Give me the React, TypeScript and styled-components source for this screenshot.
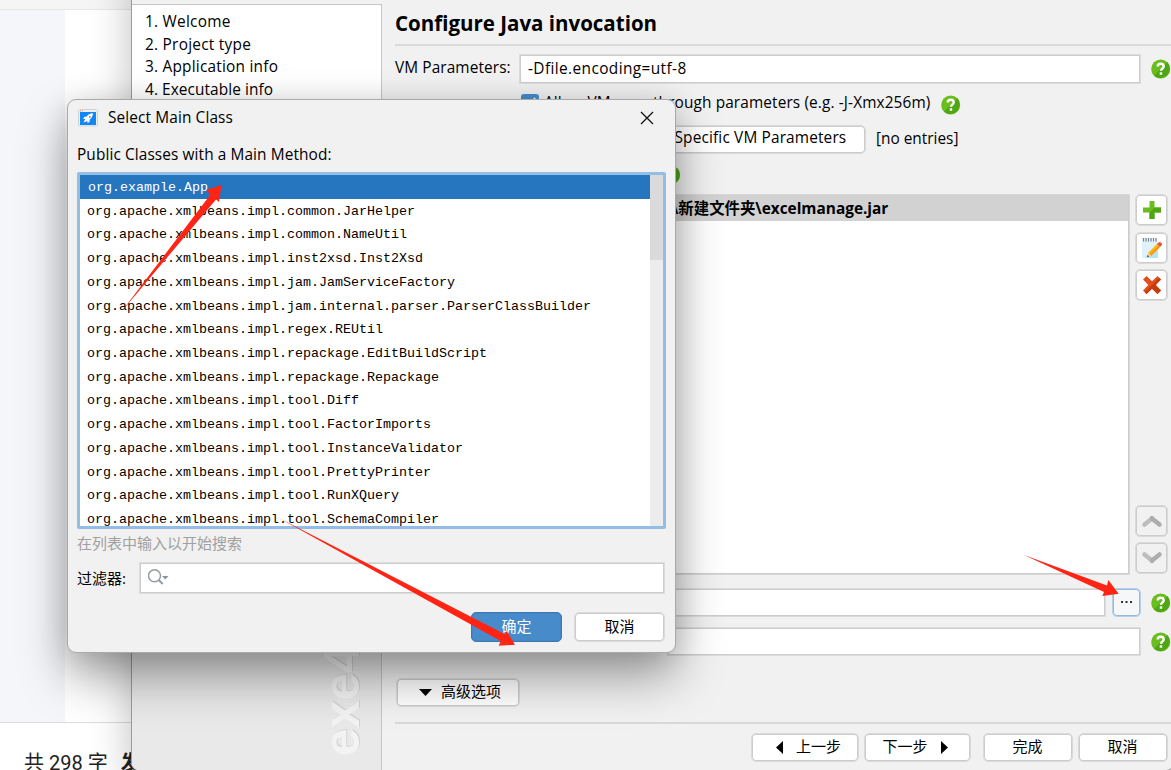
import React from 'react';
import styled, { createGlobalStyle } from 'styled-components';

const Global = createGlobalStyle`
  * { box-sizing: border-box; }
  body { margin: 0; }
  button { font: inherit; color: inherit; }
`;

const UI_FONT = `"Open Sans", "Noto Sans CJK SC", sans-serif`;

const Desktop = styled.div`
  position: relative;
  width: 1171px;
  height: 770px;
  overflow: hidden;
  background: #fff;
  color: #000;
  font: 15px/20px ${UI_FONT};
`;

const Text = styled.span<{ $track?: number; $bold?: boolean; $size?: number }>`
  white-space: pre;
  font-size: ${p => p.$size ?? 15.4}px;
  letter-spacing: ${p => p.$track ?? 0}px;
  font-weight: ${p => (p.$bold ? 700 : 400)};
`;

/* ---------- document editor behind the windows ---------- */

const Editor = styled.div`
  display: flex;
  flex-direction: column;
  height: 770px;
`;
const EditorTop = styled.div`
  height: 10px;
  background: #f5f5f5;
  border-bottom: 1px solid #e6e6e6;
`;
const EditorBody = styled.div`
  flex: 1;
  border-bottom: 1px solid #dcdcdc;
`;
const EditorMargin = styled.div`
  width: 65px;
  height: 100%;
  background: #f4f6f9;
`;
const EditorStatus = styled.div`
  height: 47px;
  display: flex;
  align-items: flex-start;
  gap: 13px;
  padding: 27px 0 0 24px;
  font: 20px/26px Roboto, "Noto Sans CJK SC", sans-serif;
  color: #222;
`;

/* ---------- wizard window ---------- */

const Wizard = styled.div`
  position: absolute;
  left: 131px;
  top: -40px;
  width: 1043px;
  height: 811px;
  padding-top: 43px;
  display: flex;
  background: #f1f1f1;
  border: 1px solid #9c9c9c;
  border-radius: 8px;
  overflow: hidden;
`;
const WizardShadow = styled.div`
  position: absolute;
  left: 131px;
  top: -40px;
  width: 1043px;
  height: 811px;
  border-radius: 8px;
  box-shadow: 0 14px 40px rgba(0, 0, 0, 0.26);
`;
const Sidebar = styled.aside`
  position: relative;
  width: 250px;
  height: 767px;
  padding: 5px 0 0 13px;
  border: solid #c6c6c6;
  border-width: 1px 1px 0 0;
  background: linear-gradient(#fff 0, #fff 12%, #e7e7e7 80%, #e9e9e9);
`;
const Step = styled.div`
  height: 22.65px;
  line-height: 22.65px;
`;
const Brand = styled.div`
  position: absolute;
  left: 185px;
  bottom: 15px;
  writing-mode: vertical-rl;
  transform: rotate(180deg);
  font: bold 50px/50px "Liberation Sans", sans-serif;
  color: #f3f3f3;
  text-shadow: 1px 1px 0 #d2d2d2;
`;
const Main = styled.main`
  flex: 1;
  display: flex;
  flex-direction: column;
  padding-left: 13px;
`;
const Title = styled.h1`
  margin: 0;
  height: 42px;
  padding-top: 5px;
  font-size: 20.5px;
  line-height: 28px;
  border-bottom: 2px solid #dadada;
`;
const Row = styled.div<{ $h: number; $mt?: number; $indent?: number }>`
  display: flex;
  align-items: center;
  flex: none;
  height: ${p => p.$h}px;
  margin-top: ${p => p.$mt ?? 0}px;
  padding-left: ${p => p.$indent ?? 0}px;
`;
const Label = styled.div<{ $w: number; $lift?: number }>`
  width: ${p => p.$w}px;
  flex: none;
  padding-bottom: ${p => p.$lift ?? 0}px;
`;
const Field = styled.div<{ $w: number; $h?: number }>`
  width: ${p => p.$w}px;
  height: ${p => p.$h ?? 30}px;
  flex: none;
  padding: 3px 8px;
  background: #fff;
  border: 1px solid #dcdcdc;
  box-shadow: inset 0 0 0 1px #cecece;
`;
const Push = styled.span<{ $w: number }>`
  width: ${p => p.$w}px;
  flex: none;
`;
const Button = styled.button<{ $w: number; $h?: number; $primary?: boolean; $focus?: boolean; $flat?: boolean; $icon?: boolean }>`
  width: ${p => p.$w}px;
  height: ${p => p.$h ?? 29}px;
  flex: none;
  padding: 0 0 ${p => (p.$icon ? 0 : 3)}px;
  display: flex;
  align-items: center;
  justify-content: center;
  white-space: pre;
  border-radius: 5px;
  border: 1px solid ${p => (p.$focus ? '#b7cfe8' : p.$primary ? '#3c79b4' : '#dadada')};
  box-shadow: inset 0 0 0 1px ${p => (p.$focus ? '#94bae0' : p.$primary ? '#4585c4' : '#cccccc')};
  background: ${p => (p.$primary ? '#488bcb' : p.$flat ? '#f1f1f1' : p.$focus ? '#f6f7f9' : '#fff')};
  color: ${p => (p.$primary ? '#fff' : '#000')};
`;
const CheckBox = styled.span`
  width: 18px;
  height: 18px;
  flex: none;
  display: flex;
  align-self: flex-start;
  border-radius: 3px;
  background: #488bcb;
  margin: -1px 5px 0 0;
`;
const ClassPath = styled.div`
  display: flex;
  gap: 5px;
  height: 381px;
  margin-top: 9px;
  padding-left: 124px;
`;
const PathList = styled.div`
  width: 611px;
  background: #fff;
  border: 1px solid #d8d8d8;
  box-shadow: inset 0 0 0 1px #cdcdcd;
`;
const PathEntry = styled.div`
  height: 26px;
  margin-right: 1px;
  padding-left: 152px;
  line-height: 26px;
  background: #d2d2d2;
`;
const Tools = styled.div`
  display: flex;
  flex-direction: column;
  gap: 5.5px;
  padding-bottom: 1px;
`;
const Grow = styled.div`
  flex: 1;
`;
const Divider = styled.div`
  height: 2px;
  background: #d9d9d9;
  margin-top: 15px;
`;
const Footer = styled.div`
  display: flex;
  padding: 9px 0 0 355.5px;
`;

/* ---------- modal dialog ---------- */

const Dialog = styled.section`
  position: absolute;
  left: 67px;
  top: 99px;
  width: 609px;
  height: 554px;
  padding: 0 10px 0 9px;
  display: flex;
  flex-direction: column;
  background: #f1f1f1;
  border: 1px solid #a9a9a9;
  border-radius: 9px;
  box-shadow: 0 24px 48px rgba(0, 0, 0, 0.36), 0 3px 30px rgba(0, 0, 0, 0.12);
`;
const DialogBar = styled.header`
  display: flex;
  align-items: center;
  height: 35px;
  padding-left: 1px;
  svg:last-child { margin-left: auto; margin-right: 11px; }
`;
const DialogName = styled.div`
  margin-left: 10px;
  padding-bottom: 1px;
`;
const Caption = styled.div`
  margin: 9px 0 7px;
`;
const ListBox = styled.div`
  height: 357px;
  width: 589px;
  display: flex;
  border: 3px solid #93bde5;
  border-radius: 2px;
  background: #fff;
  overflow: hidden;
`;
const Items = styled.div`
  flex: 1;
  font: 13.33px/26px "Liberation Mono", monospace;
`;
const Item = styled.div<{ $on?: boolean }>`
  height: 23.72px;
  padding-left: ${p => (p.$on ? 8 : 7)}px;
  white-space: pre;
  background: ${p => (p.$on ? '#2675bf' : 'transparent')};
  color: ${p => (p.$on ? '#fff' : '#000')};
`;
const ScrollTrack = styled.div`
  width: 13px;
  background: #ececec;
`;
const ScrollThumb = styled.div`
  height: 85px;
  background: #dadada;
`;
const Hint = styled.div`
  margin-top: 4px;
  color: #a0a0a0;
`;
const FilterRow = styled.div`
  display: flex;
  align-items: center;
  margin-top: 9px;
`;
const DialogButtons = styled.div`
  display: flex;
  justify-content: flex-end;
  gap: 12px;
  margin-top: 18px;
`;
const Arrows = styled.svg`
  position: absolute;
  inset: 0;
`;

const Help = () => (
  <svg width="20" height="20" viewBox="0 0 20 20">
    <circle cx="9.7" cy="10" r="9.5" fill="#69bd1e" />
    <path d="M16.4 3.3A9.5 9.5 0 0 1 3 16.7z" fill="#4fa513" />
    <path d="M6.700 7.600C6.700 5.700 8 4.800 9.700 4.800s3 1 3 2.600c0 2.200-2.700 2.200-2.700 4.400" fill="none" stroke="#fff" strokeWidth="2.400" />
    <rect x="8.700" y="13.300" width="2.500" height="2.400" fill="#fff" />
  </svg>
);

const Plus = () => (
  <svg width="20" height="20" viewBox="0 0 20 20">
    <path d="M7.500 1h5v6.500h6.500v5h-6.500V19h-5v-6.500H1v-5h6.500z" fill="#69bd1e" />
    <path d="M12.500 7.500H19v5h-6.500V19h-5v-6.500z" fill="#4fa513" />
  </svg>
);

const Edit = () => (
  <svg width="22" height="22" viewBox="0 0 22 22">
    <path d="M1 4h16v17H1z" fill="#dff2fc" />
    <path d="M17 6v15H4z" fill="#b5e2f8" />
    <path d="M2.500 1v3.500M5 1v3.500M7.500 1v3.500M10 1v3.500M12.500 1v3.500M15 1v3.500" stroke="#75828c" strokeWidth="1.300" />
    <path d="M6 20l1.200-4.200L16 7l3 3-8.800 8.800z" fill="#fdb813" />
    <path d="M19 10l-8.800 8.800-1.500-1.500L17.500 8.500z" fill="#f59a00" />
    <path d="M16 7l1.500-1.500q1.200-1 2.500 0l.7.800q.8 1.200-.2 2.200L19 10z" fill="#f0503c" />
    <path d="M6 20l1.200-4.200 3 3z" fill="#f3d3a4" />
    <path d="M6 20l.6-2 1.500 1.400z" fill="#333" />
  </svg>
);

const Cross = () => (
  <svg width="20" height="20" viewBox="0 0 20 20">
    <path d="M4.500 1L10 6.300 15.500 1 19 4.500 13.700 10 19 15.500 15.500 19 10 13.700 4.500 19 1 15.500 6.300 10 1 4.500z" fill="#e04f1c" />
    <path d="M19 4.500L13.700 10l5.300 5.500-3.500 3.500L10 13.700 4.500 19l-1.700-1.700L17.300 2.800z" fill="#c53c10" />
  </svg>
);

const Chevron = ({ down }: { down?: boolean }) => (
  <svg width="22" height="14" viewBox="0 0 22 14">
    <g transform={down ? 'matrix(1 0 0 -1 0 14)' : undefined}>
      <path d="M3.500 10.500L11 4.500V4" stroke="#bdbdbd" strokeWidth="4.500" strokeLinecap="round" fill="none" />
      <path d="M11 4.500l7.500 6" stroke="#adadad" strokeWidth="4.500" strokeLinecap="round" fill="none" />
    </g>
  </svg>
);

const AppIcon = () => (
  <svg width="20" height="18" viewBox="0 0 20 18">
    <rect x=".5" y=".5" width="19" height="16.500" rx="1" fill="#eef0f2" stroke="#cfd3d6" />
    <path d="M2 1.800h4" stroke="#e58b7b" strokeDasharray="1 1" />
    <rect x="2" y="3" width="16" height="13" fill="#0f87f5" />
    <path d="M15 4.300c-3 .1-4.800 1.200-6.300 3.200L6.500 7.800 5 9.800l2.200.2-1.700 3.500L9.300 12l.4 2.300 1.900-1.700.2-2.200c1.900-1.500 3-3.300 3.200-6.100z" fill="#fff" />
    <circle cx="11.800" cy="7.800" r=".9" fill="#e05a3a" />
  </svg>
);

const Close = () => (
  <svg width="14" height="14" viewBox="0 0 14 14">
    <path d="M1 1l12 12M13 1L1 13" stroke="#111" strokeWidth="1.300" />
  </svg>
);

const Search = () => (
  <svg width="24" height="20" viewBox="0 0 24 20">
    <circle cx="6.500" cy="9.800" r="6" fill="none" stroke="#939ba1" strokeWidth="1.500" />
    <path d="M10.700 14l4 4" stroke="#939ba1" strokeWidth="2" />
    <path d="M14 10h6.500l-3.250 3.500z" fill="#8b949a" />
  </svg>
);

const Triangle = ({ d, w, h, gap }: { d: string; w: number; h: number; gap?: string }) => (
  <svg width={w} height={h} style={{ margin: gap }}>
    <path d={d} fill="#000" />
  </svg>
);

const steps = [
  ['1. Welcome', 0.25],
  ['2. Project type', 0.25],
  ['3. Application info', 0.22],
  ['4. Executable info', 0.08],
] as const;

const pkg = 'org.apache.xmlbeans.impl.';
const classes = [
  'common.JarHelper',
  'common.NameUtil',
  'inst2xsd.Inst2Xsd',
  'jam.JamServiceFactory',
  'jam.internal.parser.ParserClassBuilder',
  'regex.REUtil',
  'repackage.EditBuildScript',
  'repackage.Repackage',
  'tool.Diff',
  'tool.FactorImports',
  'tool.InstanceValidator',
  'tool.PrettyPrinter',
  'tool.RunXQuery',
  'tool.SchemaCompiler',
];

export default function App() {
  return (
    <Desktop>
      <Global />
      <Editor>
        <EditorTop />
        <EditorBody>
          <EditorMargin />
        </EditorBody>
        <EditorStatus>
          <Text $size={20}>共 298 字</Text>
          <Text $size={20} $bold>发</Text>
        </EditorStatus>
      </Editor>
      <WizardShadow />

      <Wizard>
        <Sidebar>
          {steps.map(([s, t]) => (
            <Step key={s}>
              <Text $track={t}>{s}</Text>
            </Step>
          ))}
          <Brand>exe4j</Brand>
        </Sidebar>
        <Main>
          <Title>Configure Java invocation</Title>
          <Row $h={30} $mt={8}>
            <Label $w={124} $lift={4}>
              <Text $track={0.1}>VM Parameters:</Text>
            </Label>
            <Field $w={622}>
              <Text $track={0.4}>-Dfile.encoding=utf-8</Text>
            </Field>
            <Push $w={10} />
            <Help />
          </Row>
          <Row $h={20} $mt={11} $indent={126}>
            <CheckBox>
              <svg width="18" height="18">
                <path d="M4 9l4 4 6-9" fill="none" stroke="#fff" strokeWidth="2" />
              </svg>
            </CheckBox>
            <Label $w={387} $lift={5}>
              <Text $track={0.12}>Allow VM pass-through parameters (e.g. -J-Xmx256m)</Text>
            </Label>
            <Push $w={10} />
            <Help />
          </Row>
          <Row $h={29} $mt={10} $indent={124}>
            <Button $w={347}>
              <Text $track={0.15}>Configure Version-Specific VM Parameters</Text>
            </Button>
            <Push $w={10} />
            <Label $w={90} $lift={3}>
              <Text>[no entries]</Text>
            </Label>
          </Row>
          <Row $h={20} $mt={11} $indent={266}>
            <Help />
          </Row>
          <ClassPath>
            <PathList>
              <PathEntry>
                <Text $bold>\新建文件夹\excelmanage.jar</Text>
              </PathEntry>
            </PathList>
            <Tools>
              <Button $w={33} $h={32} $icon><Plus /></Button>
              <Button $w={33} $h={32} $icon><Edit /></Button>
              <Button $w={33} $h={32} $icon><Cross /></Button>
              <Grow />
              <Button $w={33} $h={32} $icon $flat><Chevron /></Button>
              <Button $w={33} $h={32} $icon $flat><Chevron down /></Button>
            </Tools>
          </ClassPath>
          <Row $h={29} $mt={13} $indent={124}>
            <Field $w={587} $h={29} />
            <Push $w={6} />
            <Button $w={29} $focus $icon>
              <svg width="11" height="3"><path d="M0 0h2v2H0zM4.500 0h2v2h-2zM9 0h2v2H9z" fill="#333" /></svg>
            </Button>
            <Push $w={10} />
            <Help />
          </Row>
          <Row $h={29} $mt={10} $indent={272}>
            <Field $w={474} $h={29} />
            <Push $w={10} />
            <Help />
          </Row>
          <Row $h={29} $mt={22} $indent={1}>
            <Button $w={124}>
              <Triangle d="M0 0h13L6.500 7z" w={13} h={7} gap="3px 9px 0 4px" />
              高级选项
            </Button>
          </Row>
          <Divider />
          <Footer>
            <Button $w={108}>
              <Triangle d="M7 0v13L0 6.500z" w={7} h={13} gap="2px 13px 0 8px" />
              上一步
            </Button>
            <Push $w={5} />
            <Button $w={107}>
              下一步
              <Triangle d="M0 0v13L7 6.500z" w={7} h={13} gap="2px 4px 0 13px" />
            </Button>
            <Push $w={12} />
            <Button $w={90}>完成</Button>
            <Push $w={5} />
            <Button $w={90}>取消</Button>
          </Footer>
        </Main>
      </Wizard>

      <Dialog>
        <DialogBar>
          <AppIcon />
          <DialogName>
            <Text $track={0.12}>Select Main Class</Text>
          </DialogName>
          <Close />
        </DialogBar>
        <Caption>
          <Text $track={0.1}>Public Classes with a Main Method:</Text>
        </Caption>
        <ListBox>
          <Items>
            <Item $on>org.example.App</Item>
            {classes.map(c => (
              <Item key={c}>{pkg + c}</Item>
            ))}
          </Items>
          <ScrollTrack>
            <ScrollThumb />
          </ScrollTrack>
        </ListBox>
        <Hint>在列表中输入以开始搜索</Hint>
        <FilterRow>
          <Label $w={62} $lift={1}>过滤器:</Label>
          <Field $w={526} $h={32}>
            <Search />
          </Field>
        </FilterRow>
        <DialogButtons>
          <Button $w={91} $h={30} $primary>
            确定
          </Button>
          <Button $w={91} $h={30}>取消</Button>
        </DialogButtons>
      </Dialog>

      <Arrows width="1171" height="770">
        <g fill="#ff2413">
          <path d="M122 311L210.500 194.500 206 190 221.500 185 219 202 216 199.500z" />
          <path d="M277 517L505 634.300 506.700 631 515 644.700 498.700 645.700 500.700 641z" />
          <path d="M1024 555L1107 585.500 1108.300 580 1118.700 593.700 1102.300 596 1104 592z" />
        </g>
      </Arrows>
    </Desktop>
  );
}
